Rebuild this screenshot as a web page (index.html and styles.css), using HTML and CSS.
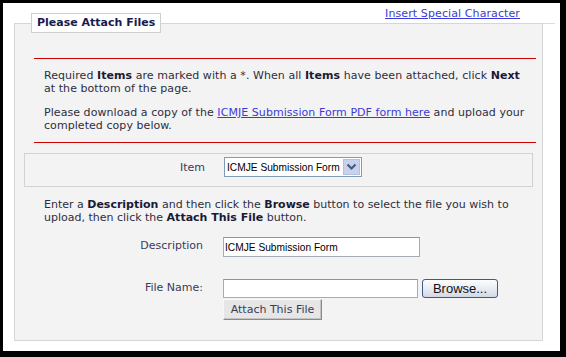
FILE: index.html
```html
<!DOCTYPE html>
<html lang="en">
<head>
    <meta charset="UTF-8">
    <meta name="viewport" content="width=device-width, initial-scale=1.0">
    <title>Attach Files</title>
    <link rel="stylesheet" href="styles.css">
</head>
<body>
    <div class="frame">
        <div class="top-bar">
            <a href="#" class="special-link">Insert Special Character</a>
        </div>
        <fieldset class="attach-box">
            <legend>Please Attach Files</legend>
            <div class="notice">
                <p>Required <b>Items</b> are marked with a *. When all <b>Items</b> have been attached, click <b>Next</b> at the bottom of the page.</p>
                <p>Please download a copy of the <a href="#">ICMJE Submission Form PDF form here</a> and upload your completed copy below.</p>
            </div>
            <div class="item-row">
                <span class="field-label">Item</span>
                <div class="select-box">
                    <select class="item-select">
                        <option>ICMJE Submission Form</option>
                    </select>
                    <span class="select-arrow">
                        <svg width="11" height="8" viewBox="0 0 11 8"><path d="M1.5 1.5 L5.5 5.5 L9.5 1.5" fill="none" stroke="#4a5a7a" stroke-width="2.2"/></svg>
                    </span>
                </div>
            </div>
            <p class="instructions">Enter a <b>Description</b> and then click the <b>Browse</b> button to select the file you wish to upload, then click the <b>Attach This File</b> button.</p>
            <div class="file-form">
                <label class="field-label" for="description">Description</label>
                <div><input type="text" id="description" class="text-input desc-input" value="ICMJE Submission Form"></div>
                <label class="field-label" for="file-name">File Name:</label>
                <div class="file-cell">
                    <div class="file-line">
                        <input type="text" id="file-name" class="text-input file-input">
                        <button class="browse-btn">Browse...</button>
                    </div>
                    <button class="attach-btn">Attach This File</button>
                </div>
            </div>
        </fieldset>
    </div>
</body>
</html>
```

FILE: styles.css
```css
* {
    margin: 0;
    padding: 0;
    box-sizing: border-box;
}
html, body {
    width: 100%;
    height: 100%;
    background-color: #fff;
    font-family: "DejaVu Sans", Verdana, sans-serif;
    font-size: 11px;
    color: #2e2e3e;
}
.frame {
    width: 566px;
    height: 357px;
    background-color: #fff;
    border-style: solid;
    border-color: #000;
    border-width: 3px 6px 6px 3px;
}
.top-bar {
    height: 21px;
    margin: 0 5px 0 11px;
    border-bottom: 1px solid #dcdcdc;
    text-align: right;
    padding: 4px 35px 0 0;
    line-height: 13px;
    letter-spacing: 0.1px;
}
.special-link {
    color: #3a3ad8;
}
.attach-box {
    width: 529px;
    margin: -11px 0 0 11px;
    padding: 0 9px 20px 9px;
    background-color: #f3f3f3;
    border: 1px solid #d6d6d6;
}
.attach-box legend {
    margin-left: 7px;
    padding: 1px 5px 1px 5px;
    line-height: 16px;
    font-weight: bold;
    color: #1a1a4e;
    background-color: #fff;
    border: 1px solid #cfcfcf;
}
.notice {
    margin: 25px -3px 0 10px;
    padding: 10px 6px 10px 10px;
    border-top: 1px solid #cc0000;
    border-bottom: 1px solid #cc0000;
}
.notice p {
    line-height: 13px;
    letter-spacing: 0.06px;
}
.notice p + p {
    margin-top: 11px;
}
b {
    color: #1a1a36;
}
.notice a {
    color: #3a3ad8;
}
.item-row {
    display: flex;
    align-items: center;
    height: 34px;
    margin-top: 10px;
    padding-bottom: 6px;
    border: 1px solid #d2d2d2;
}
.field-label {
    width: 179px;
    text-align: right;
    color: #3a3a5a;
}
.item-row .field-label {
    width: 180px;
}
.select-box {
    display: flex;
    margin-left: 19px;
    height: 20px;
    border: 1px solid #7f9db9;
    background-color: #fff;
}
.item-select {
    appearance: none;
    -webkit-appearance: none;
    border: none;
    outline: none;
    background: #fff;
    font-family: "Liberation Sans", Arial, sans-serif;
    font-size: 10.2px;
    color: #000;
    width: 117px;
    padding-left: 2px;
}
.select-arrow {
    display: flex;
    align-items: center;
    justify-content: center;
    width: 17px;
    margin: 1px;
    background-color: #c8d2ee;
    border: 1px solid #b4c0e0;
}
.instructions {
    margin: 11px 0 0 20px;
    line-height: 13px;
}
.file-form {
    display: grid;
    grid-template-columns: 179px auto;
    column-gap: 20px;
    row-gap: 22px;
    margin-top: 13px;
}
.file-form .field-label {
    line-height: 18px;
}
.text-input {
    height: 20px;
    border: 1px solid #a5acb5;
    border-top-color: #8e959e;
    background-color: #fff;
    font-family: "Liberation Sans", Arial, sans-serif;
    font-size: 10.2px;
    color: #000;
    padding-left: 1px;
    outline: none;
}
.desc-input {
    width: 197px;
}
.file-line {
    display: flex;
    align-items: center;
    gap: 4px;
}
.file-input {
    width: 195px;
    height: 19px;
}
.browse-btn {
    width: 76px;
    height: 19px;
    font-family: "Liberation Sans", Arial, sans-serif;
    font-size: 13px;
    color: #111;
    border: 1px solid #3c5a8c;
    border-radius: 3px;
    background: linear-gradient(#fdfdfd, #e9ecf3 50%, #d3d8e6);
}
.attach-btn {
    display: block;
    width: 99px;
    height: 21px;
    margin-top: 1px;
    font-family: "DejaVu Sans", Verdana, sans-serif;
    font-size: 11px;
    color: #3a3a5a;
    background-color: #e6e6e6;
    border: 1px solid;
    border-color: #f6f6f6 #8a8a8a #8a8a8a #f6f6f6;
    box-shadow: inset -1px -1px 0 #c4c4c4;
}
```
